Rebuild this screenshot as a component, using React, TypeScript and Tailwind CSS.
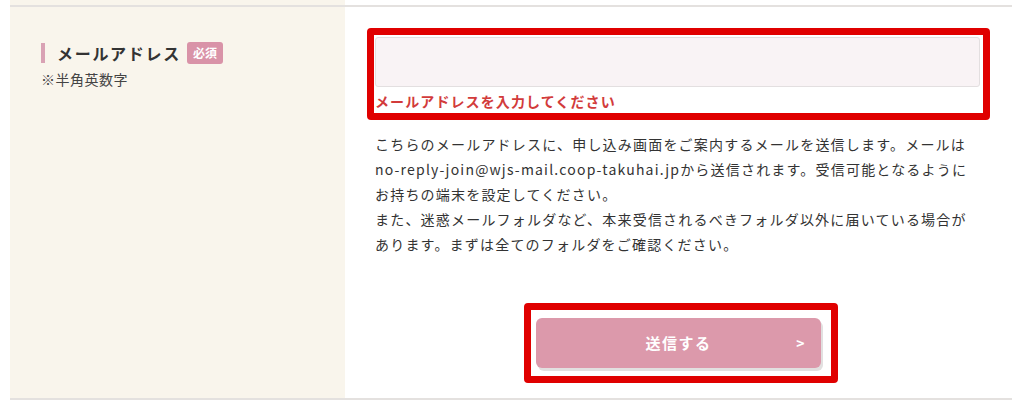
import React from "react";

const jp = "font-['Noto_Sans_CJK_JP','Noto_Sans',sans-serif]";

export default function App() {
  return (
    <div className={`w-[1024px] h-[404px] bg-white ${jp}`}>
      <div className="ml-[10px] w-[1002px]">
        {/* previous row stub */}
        <div className="flex h-[5px]">
          <div className="w-[335px] bg-[#f9f5ec]" />
          <div className="flex-1 bg-white" />
        </div>
        <div className="h-[2px] bg-[#e4e1df]" />

        {/* email row */}
        <div className="flex h-[391px]">
          <div className="w-[335px] bg-[#f9f5ec] pl-[31px] pt-[35px]">
            <div className="flex items-center h-[21px]">
              <span className="w-[4px] h-[20px] bg-[#d9a2b4]" />
              <span className="ml-[12px] text-[16px] leading-[20px] font-bold tracking-[1.7px] text-[#333]">
                メールアドレス
              </span>
              <span className="ml-[6px] h-[22px] px-[6px] rounded-[3px] bg-[#d993a8] text-white text-[12px] font-bold leading-[22px]">
                必須
              </span>
            </div>
            <p className="mt-[6px] text-[14px] leading-[20px] tracking-[0.5px] text-[#444]">
              ※半角英数字
            </p>
          </div>

          <div className="flex-1 bg-white pt-[21px] pl-[22px] pr-[22px]">
            <div className="border-[7px] border-[#e00000] rounded-[4px] px-[1px] pt-[2px] pb-[2px]">
              <input
                className="block w-[605px] h-[50px] bg-[#f9f3f5] border border-[#e3dfe0] rounded-[3px] outline-none"
                type="text"
              />
              <p className="mt-[5px] text-[14px] leading-[19px] font-bold tracking-[1.1px] text-[#d23b3b]">
                メールアドレスを入力してください
              </p>
            </div>

            <p className="mt-[12px] ml-[8px] text-[14px] leading-[25px] tracking-[1.2px] text-[#333] whitespace-nowrap">
              こちらのメールアドレスに、申し込み画面をご案内するメールを送信します。メールは
              <br />
              no-reply-join@wjs-mail.coop-takuhai.jpから送信されます。受信可能となるように
              <br />
              お持ちの端末を設定してください。
              <br />
              また、迷惑メールフォルダなど、本来受信されるべきフォルダ以外に届いている場合が
              <br />
              あります。まずは全てのフォルダをご確認ください。
            </p>

            <div className="mt-[46px] flex justify-center">
              <div className="ml-[5px] w-[314px] border-[7px] border-[#e00000] rounded-[4px] bg-white pl-[5px] pr-[10px] py-[8px]">
                <button className="relative w-[285px] h-[50px] rounded-[6px] bg-[#dc99ab] shadow-[2px_3px_0_#e2e0e0] text-white text-[15px] font-bold tracking-[1.5px]">
                  送信する
                  <span className="absolute right-[15px] top-1/2 -translate-y-1/2 text-[14px] font-bold">
                    &gt;
                  </span>
                </button>
              </div>
            </div>
          </div>
        </div>
        <div className="h-[2px] bg-[#e4e1df]" />
      </div>
    </div>
  );
}
